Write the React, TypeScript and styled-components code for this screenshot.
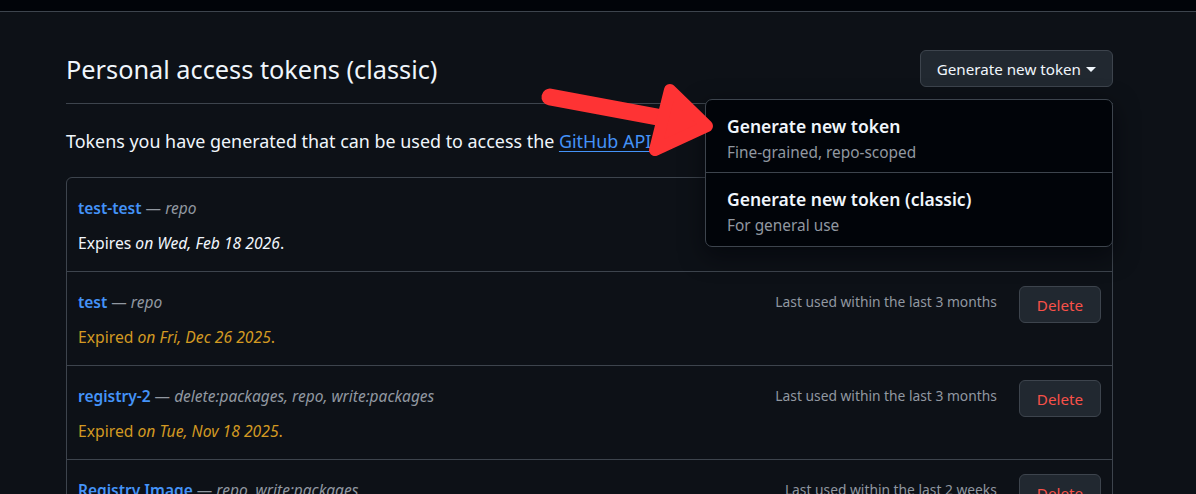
import React from "react";
import styled, { createGlobalStyle } from "styled-components";

const GlobalStyle = createGlobalStyle`
  html, body { margin: 0; padding: 0; background: #0d1117; }
  body {
    font-family: "Noto Sans", "Open Sans", sans-serif;
    color: #f0f6fc;
    overflow: hidden;
  }
  * { box-sizing: border-box; }
`;

const Page = styled.div`
  position: relative;
  min-height: 494px;
  background: #0d1117;
`;

const TopBar = styled.div`
  height: 12px;
  background: #010409;
  border-bottom: 1px solid #3d444d;
`;

const Main = styled.main`
  width: 1047px;
  margin-left: 66px;
`;

const Header = styled.div`
  display: flex;
  align-items: center;
  justify-content: space-between;
  margin-top: 38px;
  padding-bottom: 16px;
  border-bottom: 1px solid #3d444d;
`;

const Title = styled.h2`
  margin: 0;
  font-size: 25.3px;
  font-weight: 400;
  line-height: 32px;
  color: #f0f6fc;
`;

const MenuWrap = styled.div`
  position: relative;
`;

const Button = styled.button<{ $danger?: boolean }>`
  display: inline-flex;
  align-items: center;
  gap: 5px;
  height: 37px;
  padding: 0 ${(p) => (p.$danger ? "17px" : "16px")};
  font-family: inherit;
  font-size: 15.2px;
  font-weight: 400;
  color: ${(p) => (p.$danger ? "#f85149" : "#f0f6fc")};
  background: #212830;
  border: 1px solid #3d444d;
  border-radius: 6px;
  cursor: pointer;
`;

const Caret = styled.span`
  display: inline-block;
  width: 0;
  height: 0;
  border-top: 5px solid #f0f6fc;
  border-left: 5px solid transparent;
  border-right: 5px solid transparent;
  margin-top: 2px;
`;

const Dropdown = styled.div`
  position: absolute;
  top: calc(100% + 12px);
  right: 0;
  width: 408px;
  background: #010409;
  border: 1px solid #3d444d;
  border-radius: 7px;
  box-shadow: 0 8px 24px rgba(1, 4, 9, 0.6);
  z-index: 5;
  overflow: hidden;
`;

const DropItem = styled.div`
  padding: 14px 21px 8px;
  height: 72px;
  & + & {
    border-top: 1px solid #3d444d;
    height: 74px;
  }
`;

const DropTitle = styled.div`
  font-size: 17.5px;
  font-weight: 600;
  line-height: 24px;
  color: #f0f6fc;
`;

const DropSub = styled.div`
  margin-top: 3px;
  font-size: 15.4px;
  line-height: 24px;
  color: #9198a1;
`;

const Intro = styled.p`
  margin: 24px 0 0;
  font-size: 17.9px;
  line-height: 26px;
  color: #f0f6fc;
`;

const Link = styled.a`
  color: #4493f8;
  text-decoration: underline;
  text-underline-offset: 3px;
`;

const List = styled.div`
  margin-top: 23px;
  border: 1px solid #3d444d;
  border-radius: 6px;
`;

const Row = styled.div`
  display: flex;
  justify-content: space-between;
  align-items: flex-start;
  padding: 14px 11px 16px;
  & + & {
    border-top: 1px solid #3d444d;
  }
`;

const RowMain = styled.div`
  display: flex;
  flex-direction: column;
  gap: 11px;
  padding-top: 4px;
  height: 63px;
`;

const NameLine = styled.div`
  font-size: 15.5px;
  line-height: 24px;
  color: #9198a1;
  white-space: nowrap;
`;

const TokenName = styled.a`
  color: #4493f8;
  font-weight: 600;
  text-decoration: none;
`;

const Scopes = styled.em`
  font-style: italic;
`;

const ExpiryLine = styled.div<{ $expired?: boolean }>`
  font-size: 15.7px;
  line-height: 24px;
  color: ${(p) => (p.$expired ? "#d29922" : "#f0f6fc")};
  white-space: nowrap;
`;

const RowSide = styled.div`
  display: flex;
  align-items: flex-start;
  gap: 22px;
`;

const LastUsed = styled.span`
  margin-top: 4px;
  font-size: 13.8px;
  line-height: 24px;
  color: #9198a1;
  white-space: nowrap;
`;

const ArrowLayer = styled.svg`
  position: absolute;
  left: 0;
  top: 0;
  width: 1196px;
  height: 494px;
  pointer-events: none;
  z-index: 10;
`;

type Token = {
  name: string;
  scopes: string;
  expired: boolean;
  date: string;
  lastUsed: string;
};

const tokens: Token[] = [
  { name: "test-test", scopes: "repo", expired: false, date: "Wed, Feb 18 2026", lastUsed: "Last used within the last week" },
  { name: "test", scopes: "repo", expired: true, date: "Fri, Dec 26 2025", lastUsed: "Last used within the last 3 months" },
  { name: "registry-2", scopes: "delete:packages, repo, write:packages", expired: true, date: "Tue, Nov 18 2025", lastUsed: "Last used within the last 3 months" },
  { name: "Registry Image", scopes: "repo, write:packages", expired: true, date: "Sat, Oct 18 2025", lastUsed: "Last used within the last 2 weeks" },
];

export default function App() {
  return (
    <Page>
      <GlobalStyle />
      <TopBar />
      <Main>
        <Header>
          <Title>Personal access tokens (classic)</Title>
          <MenuWrap>
            <Button>
              Generate new token
              <Caret />
            </Button>
            <Dropdown>
              <DropItem>
                <DropTitle>Generate new token</DropTitle>
                <DropSub>Fine-grained, repo-scoped</DropSub>
              </DropItem>
              <DropItem>
                <DropTitle>Generate new token (classic)</DropTitle>
                <DropSub>For general use</DropSub>
              </DropItem>
            </Dropdown>
          </MenuWrap>
        </Header>
        <Intro>
          Tokens you have generated that can be used to access the <Link href="#">GitHub API</Link>.
        </Intro>
        <List>
          {tokens.map((t) => (
            <Row key={t.name}>
              <RowMain>
                <NameLine>
                  <TokenName href="#">{t.name}</TokenName> — <Scopes>{t.scopes}</Scopes>
                </NameLine>
                <ExpiryLine $expired={t.expired}>
                  {t.expired ? "Expired" : "Expires"} <em>on {t.date}</em>.
                </ExpiryLine>
              </RowMain>
              <RowSide>
                <LastUsed>{t.lastUsed}</LastUsed>
                <Button $danger>Delete</Button>
              </RowSide>
            </Row>
          ))}
        </List>
      </Main>
      <ArrowLayer viewBox="0 0 1196 494">
        <line x1="550" y1="97" x2="668" y2="119" stroke="#fe3334" strokeWidth="17" strokeLinecap="round" />
        <polygon
          points="670,90 707,126 655,150"
          fill="#fe3334"
          stroke="#fe3334"
          strokeWidth="12"
          strokeLinejoin="round"
        />
      </ArrowLayer>
    </Page>
  );
}
